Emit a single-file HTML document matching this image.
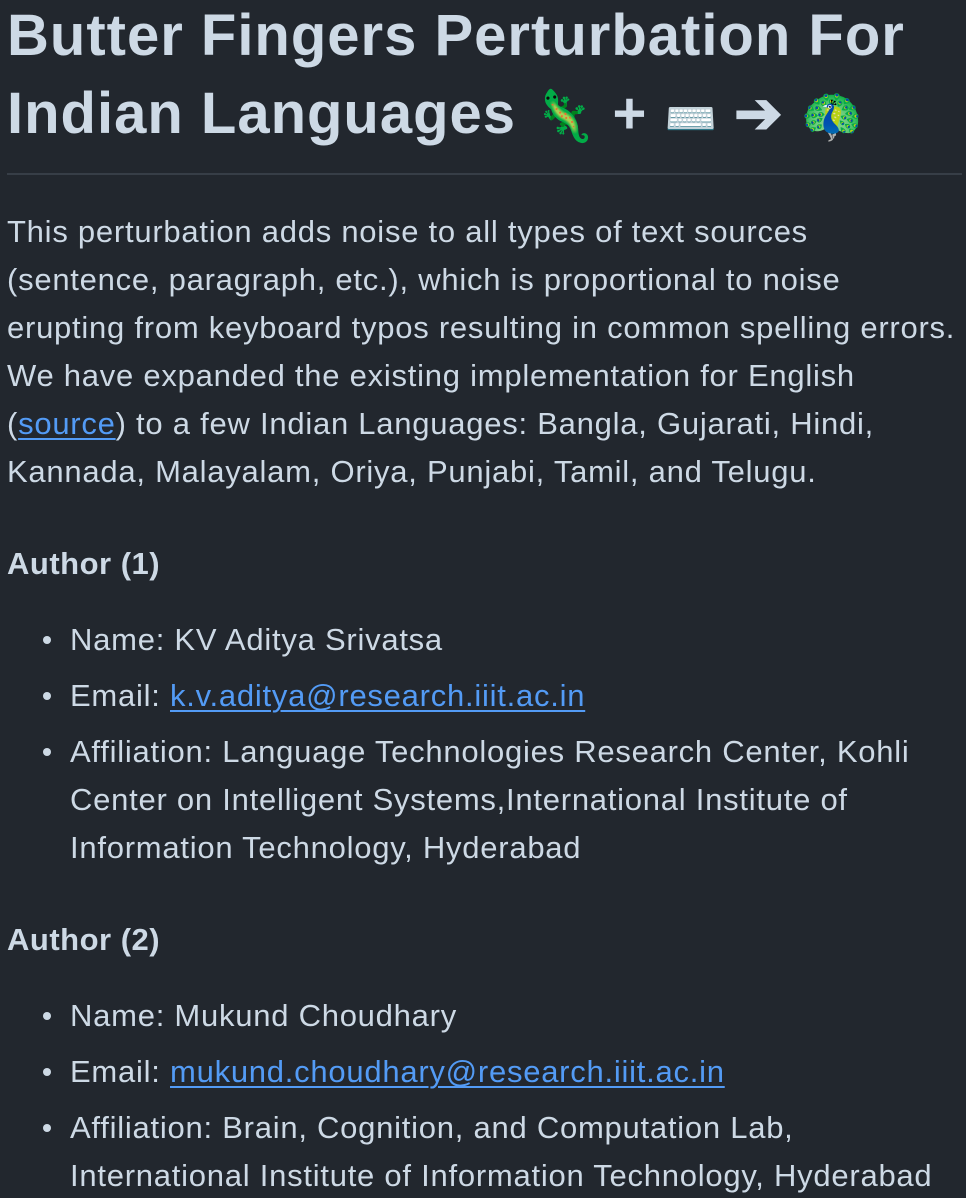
<!DOCTYPE html>
<html><head><meta charset="utf-8"><style>
html,body{margin:0;padding:0;background:#22272e;width:966px;height:1198px;overflow:hidden}
body{font-family:"Liberation Sans",Arial,sans-serif;color:#adbac7;}
.w{padding-left:7px;white-space:nowrap;margin-top:-3px}
h1{margin:0;font-size:58px;line-height:78px;font-weight:bold;color:#cdd9e5;padding-bottom:15px;border-bottom:2px solid #373e47;width:955px;letter-spacing:1px}
p{margin:33px 0 0;font-size:31px;line-height:48px;color:#cdd9e5;letter-spacing:0.75px}
h3{margin:44px 0 0;font-size:31px;line-height:48px;font-weight:bold;color:#cdd9e5;letter-spacing:0.5px}
ul{margin:28px 0 0;padding:0;list-style:none}
li{position:relative;padding-left:63px;font-size:31px;line-height:48px;color:#cdd9e5;margin-bottom:8px;letter-spacing:0.75px}
li:before{content:"";position:absolute;left:36px;top:20px;width:8px;height:8px;border-radius:50%;background:#cdd9e5}
a{color:#539bf5;text-decoration:underline;text-underline-offset:4px;text-decoration-thickness:2px}
.e{font-size:50px;letter-spacing:0}
</style></head><body><div class="w">
<h1>Butter Fingers Perturbation For<br>Indian Languages <span class="e">🦎</span> + <span class="e" style="font-size:42px">⌨️</span> ➔ <span class="e">🦚</span></h1>
<p>This perturbation adds noise to all types of text sources<br>(sentence, paragraph, etc.), which is proportional to noise<br>erupting from keyboard typos resulting in common spelling errors.<br>We have expanded the existing implementation for English<br>(<a>source</a>) to a few Indian Languages: Bangla, Gujarati, Hindi,<br>Kannada, Malayalam, Oriya, Punjabi, Tamil, and Telugu.</p>
<h3>Author (1)</h3>
<ul>
<li>Name: KV Aditya Srivatsa</li>
<li>Email: <a>k.v.aditya@research.iiit.ac.in</a></li>
<li>Affiliation: Language Technologies Research Center, Kohli<br>Center on Intelligent Systems,International Institute of<br>Information Technology, Hyderabad</li>
</ul>
<h3 style="margin-top:44px">Author (2)</h3>
<ul>
<li>Name: Mukund Choudhary</li>
<li>Email: <a>mukund.choudhary@research.iiit.ac.in</a></li>
<li>Affiliation: Brain, Cognition, and Computation Lab,<br>International Institute of Information Technology, Hyderabad</li>
</ul>
</div></body></html>
